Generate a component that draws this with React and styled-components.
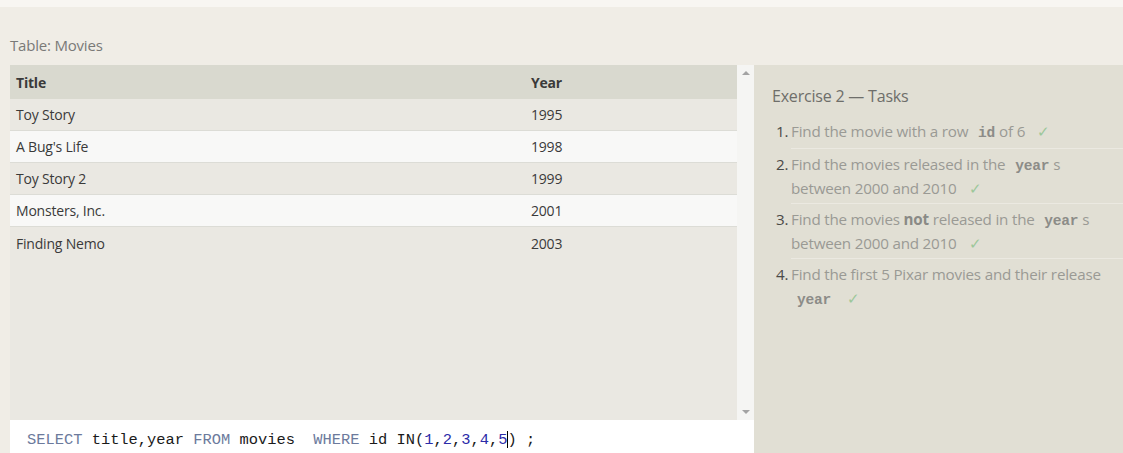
import React from "react";
import styled, { createGlobalStyle } from "styled-components";

const GlobalStyle = createGlobalStyle`
  body {
    margin: 0;
    background: #f0ede6;
    font-family: "Open Sans", "Noto Sans", sans-serif;
  }
`;

const Page = styled.div`
  width: 1123px;
  height: 453px;
  overflow: hidden;
  background: #f0ede6;
  border-top: 7px solid #f8f6f2;
  box-sizing: border-box;
`;

const Caption = styled.div`
  padding: 28px 0 0 10px;
  height: 30px;
  font-size: 15px;
  color: #7a7a78;
  letter-spacing: -0.2px;
`;

const Body = styled.div`
  display: flex;
  height: 388px;
`;

const Left = styled.div`
  margin-left: 10px;
  width: 744px;
  display: flex;
  flex-direction: column;
`;

const TableWrap = styled.div`
  display: flex;
  height: 355px;
`;

const TableArea = styled.div`
  flex: 1;
  background: #eae8e2;
`;

const Scrollbar = styled.div`
  width: 17px;
  background: #f5f5f3;
  display: flex;
  flex-direction: column;
  justify-content: space-between;
  align-items: center;
  padding: 6px 0;
  box-sizing: border-box;
`;

const Arrow = styled.div`
  width: 0;
  height: 0;
  border-left: 4px solid transparent;
  border-right: 4px solid transparent;
  ${(p) =>
    p.up
      ? "border-bottom: 4px solid #a3a3a3;"
      : "border-top: 4px solid #a3a3a3;"}
`;

const Row = styled.div`
  display: grid;
  grid-template-columns: 515px 1fr;
  height: ${(p) => (p.head ? "34px" : "32px")};
  align-items: center;
  padding-left: 6px;
  font-size: 14px;
  color: #3a3a3a;
  background: ${(p) => (p.head ? "#d9d9cf" : p.even ? "#f8f8f7" : "#eae8e2")};
  border-bottom: ${(p) => (p.head || p.last ? "none" : "1px solid #dcdcd6")};
  box-sizing: border-box;
  font-weight: ${(p) => (p.head ? 700 : 400)};
  letter-spacing: -0.2px;
`;

const Editor = styled.div`
  height: 33px;
  background: #ffffff;
  padding: 9px 0 0 17px;
  box-sizing: border-box;
  font-family: "Liberation Mono", monospace;
  font-size: 15.4px;
  line-height: 22px;
  color: #1a1a1a;
  white-space: pre;
`;

const Kw = styled.span`
  color: #6c7a9c;
`;

const Num = styled.span`
  color: #2b2ba8;
`;

const Caret = styled.span`
  display: inline-block;
  width: 1px;
  height: 17px;
  background: #000;
  vertical-align: middle;
  margin-right: -1px;
`;

const Right = styled.div`
  flex: 1;
  background: #e1dfd4;
  padding: 20px 0 0 18px;
`;

const Heading = styled.div`
  font-size: 16px;
  color: #6e6e6a;
  margin-bottom: 9px;
  letter-spacing: -0.2px;
`;

const List = styled.ol`
  margin: 0;
  padding: 0;
  list-style: none;
`;

const Item = styled.li`
  display: flex;
  font-size: 15.2px;
  line-height: 24px;
  color: #9a9a94;
  padding: 3px 0 ${(p) => (p.first ? "5px" : "3px")};
  border-bottom: ${(p) => (p.last ? "none" : "1px solid #ebe9e1")};
  margin-left: 19px;
  letter-spacing: -0.2px;
`;

const ItemText = styled.span`
  display: block;
  line-height: 24px;
  & > * {
    line-height: 1;
  }
`;

const ItemNum = styled.span`
  color: #4a4a48;
  width: 15px;
  margin-left: -15px;
  flex-shrink: 0;
`;

const Code = styled.code`
  font-family: "Liberation Mono", monospace;
  font-weight: 700;
  font-size: 14.5px;
  color: #8c8c88;
  padding: 0 4px 0 6px;
`;

const Strong = styled.b`
  color: #8a8a86;
`;

const Check = styled.span`
  color: #9cc79a;
  margin-left: 12px;
  font-size: 15px;
`;

const movies = [
  ["Toy Story", "1995"],
  ["A Bug's Life", "1998"],
  ["Toy Story 2", "1999"],
  ["Monsters, Inc.", "2001"],
  ["Finding Nemo", "2003"],
];

export default function App() {
  return (
    <Page>
      <GlobalStyle />
      <Caption>Table: Movies</Caption>
      <Body>
        <Left>
          <TableWrap>
            <TableArea>
              <Row head>
                <span>Title</span>
                <span>Year</span>
              </Row>
              {movies.map(([t, y], i) => (
                <Row key={t} even={i % 2 === 1} last={i === movies.length - 1}>
                  <span>{t}</span>
                  <span>{y}</span>
                </Row>
              ))}
            </TableArea>
            <Scrollbar>
              <Arrow up />
              <Arrow />
            </Scrollbar>
          </TableWrap>
          <Editor>
            <Kw>SELECT</Kw> title,year <Kw>FROM</Kw> movies  <Kw>WHERE</Kw> id IN(
            <Num>1</Num>,<Num>2</Num>,<Num>3</Num>,<Num>4</Num>,<Num>5</Num>
            <Caret />) ;
          </Editor>
        </Left>
        <Right>
          <Heading>Exercise 2 — Tasks</Heading>
          <List>
            <Item first>
              <ItemNum>1.</ItemNum>
              <ItemText>
                Find the movie with a row <Code>id</Code>of 6<Check>✓</Check>
              </ItemText>
            </Item>
            <Item>
              <ItemNum>2.</ItemNum>
              <ItemText>
                Find the movies released in the <Code>year</Code>s
                <br />
                between 2000 and 2010<Check>✓</Check>
              </ItemText>
            </Item>
            <Item>
              <ItemNum>3.</ItemNum>
              <ItemText>
                Find the movies <Strong>not</Strong> released in the{" "}
                <Code>year</Code>s
                <br />
                between 2000 and 2010<Check>✓</Check>
              </ItemText>
            </Item>
            <Item last>
              <ItemNum>4.</ItemNum>
              <ItemText>
                Find the first 5 Pixar movies and their release
                <br />
                <Code>year</Code>
                <Check>✓</Check>
              </ItemText>
            </Item>
          </List>
        </Right>
      </Body>
    </Page>
  );
}
